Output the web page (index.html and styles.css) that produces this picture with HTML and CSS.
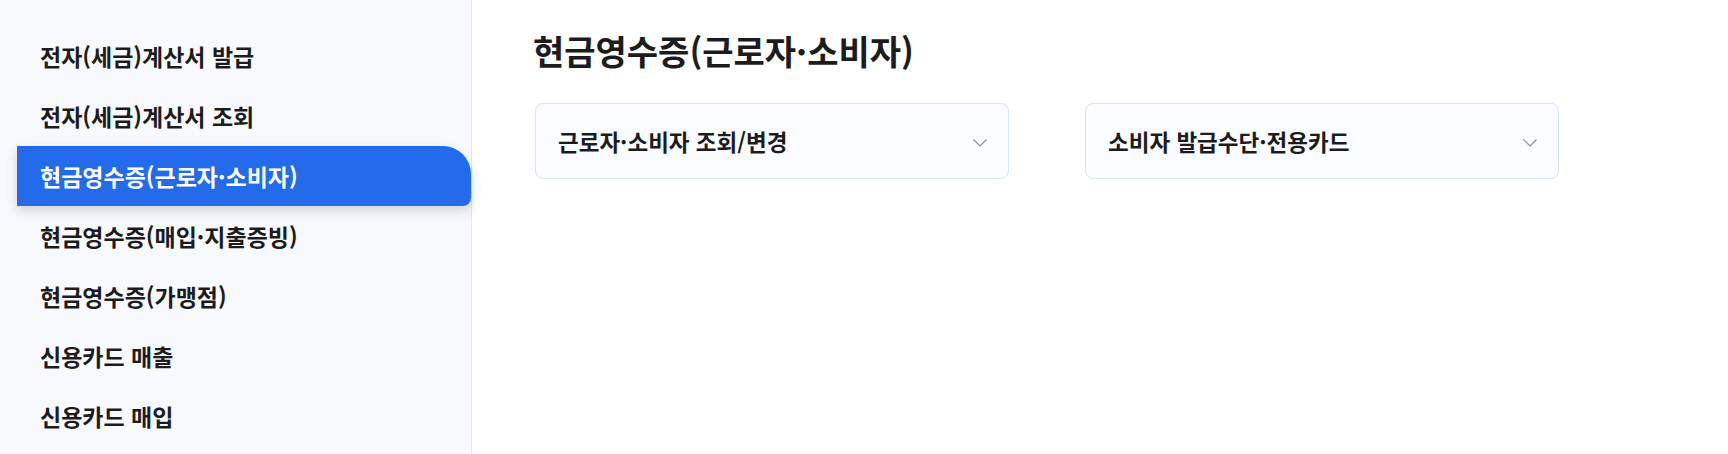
FILE: index.html
```html
<!DOCTYPE html>
<html lang="ko">
<head>
    <meta charset="utf-8">
    <title>현금영수증(근로자·소비자)</title>
    <link rel="stylesheet" href="styles.css">
</head>
<body>

    <div class="layout">
        <nav class="sidebar">
            <ul class="menu">
                <li class="menu-item">전자(세금)계산서 발급</li>
                <li class="menu-item">전자(세금)계산서 조회</li>
                <li class="menu-item active">현금영수증(근로자·소비자)</li>
                <li class="menu-item">현금영수증(매입·지출증빙)</li>
                <li class="menu-item">현금영수증(가맹점)</li>
                <li class="menu-item">신용카드 매출</li>
                <li class="menu-item">신용카드 매입</li>
            </ul>
        </nav>

        <main class="content">
            <h1 class="page-title">현금영수증(근로자·소비자)</h1>
            <div class="cards">
                <div class="card">
                    <span class="card-label">근로자·소비자 조회/변경</span>
                    <svg class="chevron" width="14" height="8" viewBox="0 0 14 8">
                        <path d="M0.5 0.5 L7 7 L13.5 0.5" fill="none" stroke="#8a8d93" stroke-width="1.2"/>
                    </svg>
                </div>
                <div class="card">
                    <span class="card-label">소비자 발급수단·전용카드</span>
                    <svg class="chevron" width="14" height="8" viewBox="0 0 14 8">
                        <path d="M0.5 0.5 L7 7 L13.5 0.5" fill="none" stroke="#8a8d93" stroke-width="1.2"/>
                    </svg>
                </div>
            </div>
        </main>
    </div>

</body>
</html>
```

FILE: styles.css
```css
body {
    margin: 0;
    font-family: "Noto Sans CJK KR", "Noto Sans", sans-serif;
    color: #1c1c1e;
    background-color: #fff;
}
.layout {
    display: flex;
    height: 454px;
}
.sidebar {
    width: 471px;
    flex-shrink: 0;
    background-color: #f8f9fd;
    border-right: 1px solid #dfe6f4;
}
.menu {
    list-style-type: none;
    margin: 0;
    padding: 26px 0 0 17px;
}
.menu-item {
    height: 60px;
    display: flex;
    align-items: center;
    padding-left: 23px;
    font-size: 23px;
    font-weight: 700;
}
.menu-item.active {
    background-color: #236bea;
    color: #fff;
    border-radius: 0 28px 8px 0;
    box-shadow: 0 5px 12px rgba(40, 50, 80, 0.18);
}
.content {
    flex: 1;
    padding: 28px 0 0 61px;
}
.page-title {
    margin: 0;
    font-size: 34px;
    font-weight: 700;
    line-height: 45px;
    color: #1c1c1e;
}
.cards {
    display: flex;
    gap: 76px;
    margin-top: 30px;
    margin-left: 2px;
}
.card {
    width: 474px;
    height: 76px;
    box-sizing: border-box;
    display: flex;
    align-items: center;
    justify-content: space-between;
    padding: 0 21px 0 22px;
    background-color: #fafcff;
    border: 1px solid #d9e4f7;
    border-radius: 8px;
}
.card-label {
    font-size: 22.5px;
    font-weight: 700;
}
.chevron {
    margin-top: 4px;
}
```
